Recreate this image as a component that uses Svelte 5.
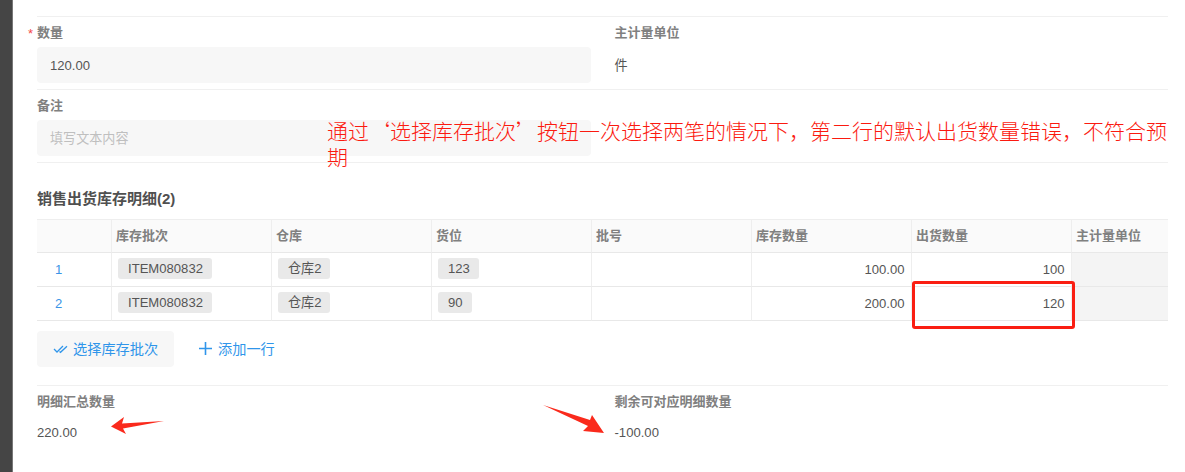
<script lang="ts">
	const columns = ['', '库存批次', '仓库', '货位', '批号', '库存数量', '出货数量', '主计量单位'];
	const rows = [
		{ no: 1, batch: 'ITEM080832', store: '仓库2', place: '123', stock: '100.00', out: '100' },
		{ no: 2, batch: 'ITEM080832', store: '仓库2', place: '90', stock: '200.00', out: '120' }
	];
</script>

<div class="page" lang="zh-CN">
	<div class="strip"></div>
	<main class="main">
		<section class="field-row first">
			<div class="field">
				<span class="label required">数量</span>
				<div class="input">120.00</div>
			</div>
			<div class="field">
				<span class="label">主计量单位</span>
				<div class="plain">件</div>
			</div>
		</section>
		<section class="field-row second">
			<div class="field wide">
				<span class="label">备注</span>
				<div class="input placeholder">填写文本内容</div>
			</div>
		</section>

		<h2 class="title">销售出货库存明细(2)</h2>

		<div class="table">
			{#each columns as col}
				<div class="th">{col}</div>
			{/each}
			{#each rows as row}
				<div class="td no">{row.no}</div>
				<div class="td"><span class="tag">{row.batch}</span></div>
				<div class="td"><span class="tag">{row.store}</span></div>
				<div class="td"><span class="tag">{row.place}</span></div>
				<div class="td"></div>
				<div class="td num">{row.stock}</div>
				<div class="td num">{row.out}</div>
				<div class="td off"></div>
			{/each}
		</div>

		<div class="actions">
			<button class="btn btn--soft">
				<svg width="16" height="12" viewBox="0 0 16 12" fill="none" stroke="currentColor" stroke-width="1.3">
					<path d="M1 6l3 3 6-6" />
					<path d="M6.5 8.5l1 .8 6.5-6" />
				</svg>
				选择库存批次
			</button>
			<button class="btn btn--text">
				<svg width="13" height="13" viewBox="0 0 13 13" fill="none" stroke="currentColor" stroke-width="1.6">
					<path d="M6.5 0v13M0 6.5h13" />
				</svg>
				添加一行
			</button>
		</div>

		<section class="summary">
			<div>
				<span class="label">明细汇总数量</span>
				<div class="value">220.00</div>
			</div>
			<div>
				<span class="label">剩余可对应明细数量</span>
				<div class="value">-100.00</div>
			</div>
		</section>
	</main>

	<!-- annotations pasted over the screenshot -->
	<p class="note">通过‘选择库存批次’按钮一次选择两笔的情况下，第二行的默认出货数量错误，不符合预期</p>
	<div class="red-box"></div>
	<svg class="arrow arrow--left" width="54" height="18" viewBox="0 0 54 18">
		<path d="M0 9.5L13 0 11 6.5 53 4 12 11.5 15 17z" fill="#fa2a1c" />
	</svg>
	<svg class="arrow arrow--right" width="62" height="30" viewBox="0 0 62 30">
		<path d="M0 0L47 15 49 10 61 28 40 26 45 21z" fill="#fa2a1c" />
	</svg>
</div>

<style>
	:global(body) {
		margin: 0;
		background: #fff;
	}

	.page {
		position: relative;
		display: flex;
		height: 472px;
		overflow: hidden;
		font-family: 'Liberation Sans', 'Noto Sans CJK SC', sans-serif;
		font-size: 13.1px;
		color: #555;
	}

	.strip {
		flex: none;
		width: 12px;
		background: #454545;
		border-right: 1px solid #777;
	}

	.main {
		flex: 1;
		min-width: 0;
		padding: 16px 17px 0 24px;
	}

	.field-row {
		display: grid;
		grid-template-columns: 1fr 1fr;
		column-gap: 24px;
		border-top: 1px solid #f0f0f0;
	}

	.first {
		padding: 8px 0 6px;
	}

	.second {
		padding: 8px 0 6px;
		border-bottom: 1px solid #f0f0f0;
	}

	.wide {
		grid-column: 1 / -1;
	}

	.label {
		display: block;
		height: 16px;
		line-height: 16px;
		font-size: 13px;
		font-weight: 600;
		color: #808080;
	}

	.required {
		position: relative;
	}

	.required::before {
		content: '*';
		position: absolute;
		left: -9px;
		top: 1px;
		font-size: 13px;
		font-weight: 400;
		color: #f5484a;
	}

	.input {
		box-sizing: border-box;
		height: 36px;
		margin-top: 6px;
		padding: 0 13px;
		line-height: 38px;
		background: #f7f7f7;
		border-radius: 4px;
	}

	.second .input {
		width: calc(50% - 12px);
	}

	.placeholder {
		color: #bfbfbf;
	}

	.plain {
		height: 36px;
		margin-top: 6px;
		line-height: 38px;
	}

	.title {
		margin: 28px 0 12px;
		height: 16px;
		line-height: 16px;
		font-size: 15px;
		font-weight: 600;
		color: #505050;
	}

	.table {
		display: grid;
		grid-template-columns: 75px repeat(6, 160px) 97px;
		border-top: 1px solid #eee;
		overflow: hidden;
	}

	.th,
	.td {
		box-sizing: border-box;
		height: 34px;
		border-bottom: 1px solid #e8e8e8;
		border-right: 1px solid #eee;
		line-height: 33px;
		white-space: nowrap;
	}

	.th {
		height: 33px;
		line-height: 32px;
		padding-left: 4px;
		background: #fafafa;
		font-size: 13px;
		font-weight: 600;
		color: #808080;
	}

	.td {
		padding: 0 6px;
	}

	.th:nth-child(8n),
	.td:nth-child(8n) {
		border-right: 0;
	}

	.no {
		padding: 0 0 0 18px;
		color: #3a94e6;
	}

	.num {
		padding-right: 6.5px;
		text-align: right;
	}

	.off {
		background: #f4f4f4;
	}

	.tag {
		display: inline-block;
		height: 21px;
		padding: 0 9px 0 10px;
		line-height: 21px;
		background: #e9e9e9;
		border-radius: 3px;
		vertical-align: 1px;
	}

	.actions {
		display: flex;
		align-items: center;
		gap: 25px;
		margin-top: 10px;
	}

	.btn {
		display: flex;
		align-items: center;
		height: 36px;
		padding-bottom: 3px;
		border: 0;
		font: inherit;
		font-size: 14.2px;
		color: #2f95ea;
	}

	.btn--soft {
		gap: 4px;
		width: 137px;
		padding-left: 16px;
		padding-right: 0;
		background: #f7f7f7;
		border-radius: 4px;
	}

	.btn--soft svg {
		margin-top: 1px;
	}

	.btn--text {
		gap: 6px;
		padding-left: 0;
		padding-right: 0;
		background: none;
	}

	.summary {
		display: grid;
		grid-template-columns: 1fr 1fr;
		column-gap: 24px;
		margin-top: 18px;
		padding-top: 8px;
		border-top: 1px solid #f0f0f0;
	}

	.value {
		margin-top: 15px;
		line-height: 16px;
	}

	.note {
		position: absolute;
		left: 327px;
		top: 117px;
		width: 845px;
		margin: 0;
		font-family: 'Noto Sans CJK SC', sans-serif;
		font-size: 21px;
		font-weight: 300;
		line-height: 26px;
		color: #fb1a10;
	}

	.red-box {
		position: absolute;
		left: 912px;
		top: 281px;
		width: 157px;
		height: 42px;
		border: 3px solid #fa1e12;
		border-radius: 3px;
	}

	.arrow {
		position: absolute;
	}

	.arrow--left {
		left: 111px;
		top: 417px;
	}

	.arrow--right {
		left: 543px;
		top: 405px;
	}
</style>
